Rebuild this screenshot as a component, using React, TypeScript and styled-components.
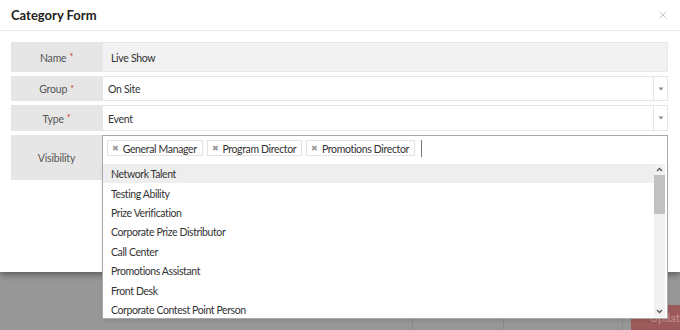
import React from 'react';
import styled, { createGlobalStyle } from 'styled-components';

const Global = createGlobalStyle`
  html, body { margin: 0; padding: 0; }
  body {
    width: 680px; height: 330px; overflow: hidden;
    background: #979797;
    font-family: Lato, "Liberation Sans", sans-serif;
    color: #333;
  }
`;

const Modal = styled.div`
  position: relative;
  z-index: 2;
  height: 272px;
  background: #fff;
  box-shadow: 0 2px 7px rgba(0, 0, 0, 0.45);
  display: flex;
  flex-direction: column;
`;

const Header = styled.div`
  height: 31px;
  box-sizing: border-box;
  border-bottom: 1px solid #ececec;
  display: flex;
  align-items: center;
  justify-content: space-between;
  padding: 0 12px 0 11px;
`;

const Title = styled.h4`
  margin: 0;
  font-size: 13px;
  font-weight: 700;
  color: #222;
`;

const Close = styled.button`
  border: 0;
  background: none;
  padding: 0;
  width: 10px;
  height: 10px;
  display: flex;
  align-items: center;
  justify-content: center;
  margin-top: -1px;
`;

const Body = styled.div`
  padding: 11px 12px 0 11px;
  display: flex;
  flex-direction: column;
  gap: 4px;
`;

const Row = styled.div<{ $h: number }>`
  display: grid;
  grid-template-columns: 91px 1fr;
  min-height: ${(p) => p.$h}px;
`;

const Label = styled.div<{ $h?: number }>`
  background: #e6e6e6;
  color: #555;
  font-size: 10.5px;
  letter-spacing: -0.2px;
  display: flex;
  align-items: center;
  justify-content: center;
  padding-top: 1px;
  box-sizing: border-box;
  height: ${(p) => (p.$h ? `${p.$h}px` : 'auto')};
`;

const Req = styled.span`
  color: #c9302c;
  font-size: 9px;
  margin-left: 3px;
  position: relative;
  top: -1px;
`;

const ReadOnly = styled.div`
  background: #f2f2f2;
  border: 1px solid #e8e8e8;
  display: flex;
  align-items: center;
  padding: 1px 0 0 8px;
  font-size: 10.5px;
  letter-spacing: -0.3px;
  color: #333;
`;

const Select = styled.div`
  background: #fff;
  border: 1px solid #e6e6e6;
  display: flex;
  align-items: stretch;
  font-size: 10.5px;
  letter-spacing: -0.3px;
`;

const SelectValue = styled.div`
  flex: 1;
  display: flex;
  align-items: center;
  padding: 1px 0 0 5px;
`;

const Arrow = styled.div`
  width: 13px;
  border-left: 1px solid #e6e6e6;
  display: flex;
  align-items: center;
  justify-content: center;
`;

const Multi = styled.div`
  position: relative;
  align-self: start;
`;

const Choices = styled.div`
  height: 29px;
  box-sizing: border-box;
  border: 1px solid #aaa;
  border-bottom: 0;
  display: flex;
  align-items: flex-start;
  gap: 4px;
  padding: 4px 0 0 4px;
  background: #fff;
`;

const Tag = styled.div`
  height: 16px;
  box-sizing: border-box;
  border: 1px solid #e2e2e2;
  background: #fff;
  display: flex;
  align-items: center;
  gap: 4px;
  padding: 1px 5px 0 4px;
  font-size: 10.5px;
  letter-spacing: -0.35px;
  color: #333;
  white-space: nowrap;
`;

const Remove = styled.span`
  color: #999;
  font-size: 8px;
  line-height: 1;
  margin-top: -1px;
`;

const Caret = styled.div`
  width: 1px;
  height: 17px;
  background: #777;
  margin-left: 2px;
`;

const Dropdown = styled.div`
  position: absolute;
  left: 0;
  right: 0;
  top: 29px;
  height: 155px;
  box-sizing: border-box;
  border: 1px solid #aaa;
  border-top: 0;
  background: #fff;
  display: flex;
  padding-right: 2px;
  z-index: 5;
  box-shadow: 0 2px 3px rgba(0, 0, 0, 0.08);
`;

const Options = styled.ul`
  flex: 1;
  list-style: none;
  margin: 0;
  padding: 0;
  overflow: hidden;
`;

const Option = styled.li<{ $active?: boolean }>`
  height: 19.4px;
  box-sizing: border-box;
  display: flex;
  align-items: center;
  padding: 1px 0 0 8px;
  font-size: 10.5px;
  letter-spacing: -0.4px;
  color: #333;
  background: ${(p) => (p.$active ? '#eeeeee' : 'transparent')};
`;

const Scrollbar = styled.div`
  width: 11px;
  margin-bottom: 1px;
  background: #f1f1f1;
  display: flex;
  flex-direction: column;
`;

const ScrollBtn = styled.div`
  height: 11px;
  display: flex;
  align-items: center;
  justify-content: center;
`;

const Thumb = styled.div`
  height: 39px;
  background: #c1c1c1;
`;

const Track = styled.div`
  flex: 1;
`;

const Backdrop = styled.div`
  height: 58px;
  display: flex;
  flex-direction: column;
  justify-content: flex-end;
`;

const FooterRow = styled.div`
  display: grid;
  grid-template-columns: 412px 91px 119px 1fr;
  align-items: end;
  height: 25px;
`;

const Cell = styled.div<{ $first?: boolean }>`
  height: 11px;
  border-left: ${(p) => (p.$first ? '0' : '1px solid #8b8b8b')};
`;

const ButtonCell = styled.div`
  height: 25px;
  display: flex;
  align-items: flex-end;
  padding-left: 8px;
  overflow: hidden;
  border-left: 1px solid #8b8b8b;
  box-sizing: border-box;
`;

const FaintButton = styled.div`
  height: 25px;
  background: #9d5a5a;
  color: rgba(255, 225, 225, 0.4);
  font-size: 11px;
  display: flex;
  align-items: center;
  padding-left: 19px;
  width: 80px;
  flex-shrink: 0;
`;

const options = [
  'Network Talent',
  'Testing Ability',
  'Prize Verification',
  'Corporate Prize Distributor',
  'Call Center',
  'Promotions Assistant',
  'Front Desk',
  'Corporate Contest Point Person',
];

const tags = ['General Manager', 'Program Director', 'Promotions Director'];

const DownTri = () => (
  <svg width="6" height="4" viewBox="0 0 6 4">
    <path d="M0.5 0.5h5L3 3.5z" fill="#8a8a8a" />
  </svg>
);

const Chevron = ({ up }: { up?: boolean }) => (
  <svg width="7" height="5" viewBox="0 0 7 5">
    <path
      d={up ? 'M1 4L3.5 1.5L6 4' : 'M1 1L3.5 3.5L6 1'}
      fill="none"
      stroke="#555"
      strokeWidth="1.3"
    />
  </svg>
);

export default function App() {
  return (
    <>
      <Global />
      <Modal>
        <Header>
          <Title>Category Form</Title>
          <Close aria-label="Close">
            <svg width="8" height="8" viewBox="0 0 8 8">
              <path d="M0.5 0.5L7.5 7.5M7.5 0.5L0.5 7.5" stroke="#c4c4c4" strokeWidth="1" />
            </svg>
          </Close>
        </Header>
        <Body>
          <Row $h={30}>
            <Label>
              Name<Req>*</Req>
            </Label>
            <ReadOnly>Live Show</ReadOnly>
          </Row>
          <Row $h={25}>
            <Label>
              Group<Req>*</Req>
            </Label>
            <Select>
              <SelectValue>On Site</SelectValue>
              <Arrow>
                <DownTri />
              </Arrow>
            </Select>
          </Row>
          <Row $h={26}>
            <Label>
              Type<Req>*</Req>
            </Label>
            <Select>
              <SelectValue>Event</SelectValue>
              <Arrow>
                <DownTri />
              </Arrow>
            </Select>
          </Row>
          <Row $h={45}>
            <Label $h={45}>Visibility</Label>
            <Multi>
              <Choices>
                {tags.map((t) => (
                  <Tag key={t}>
                    <Remove>✖</Remove>
                    {t}
                  </Tag>
                ))}
                <Caret />
              </Choices>
              <Dropdown>
                <Options>
                  {options.map((o, i) => (
                    <Option key={o} $active={i === 0}>
                      {o}
                    </Option>
                  ))}
                </Options>
                <Scrollbar>
                  <ScrollBtn>
                    <Chevron up />
                  </ScrollBtn>
                  <Thumb />
                  <Track />
                  <ScrollBtn>
                    <Chevron />
                  </ScrollBtn>
                </Scrollbar>
              </Dropdown>
            </Multi>
          </Row>
        </Body>
      </Modal>
      <Backdrop>
        <FooterRow>
          <Cell $first />
          <Cell />
          <Cell />
          <ButtonCell>
            <FaintButton>Update</FaintButton>
          </ButtonCell>
        </FooterRow>
      </Backdrop>
    </>
  );
}
